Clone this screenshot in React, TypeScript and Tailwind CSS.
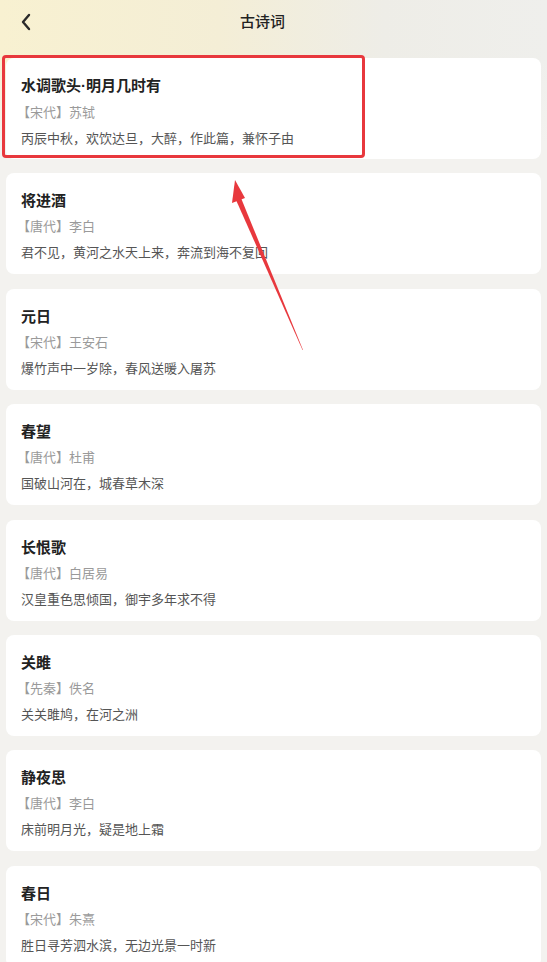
import React from 'react'

const poems = [
  {title: '水调歌头·明月几时有', era: '宋代', author: '苏轼', line: '丙辰中秋，欢饮达旦，大醉，作此篇，兼怀子由'},
  {title: '将进酒', era: '唐代', author: '李白', line: '君不见，黄河之水天上来，奔流到海不复回'},
  {title: '元日', era: '宋代', author: '王安石', line: '爆竹声中一岁除，春风送暖入屠苏'},
  {title: '春望', era: '唐代', author: '杜甫', line: '国破山河在，城春草木深'},
  {title: '长恨歌', era: '唐代', author: '白居易', line: '汉皇重色思倾国，御宇多年求不得'},
  {title: '关雎', era: '先秦', author: '佚名', line: '关关雎鸠，在河之洲'},
  {title: '静夜思', era: '唐代', author: '李白', line: '床前明月光，疑是地上霜'},
  {title: '春日', era: '宋代', author: '朱熹', line: '胜日寻芳泗水滨，无边光景一时新'},
]

// the middle dot is narrow in the reference, so give it a latin face
function Title({text}: {text: string}) {
  const parts = text.split('·')
  return (
    <>
      {parts.map((part, i) => (
        <React.Fragment key={i}>
          {i > 0 && <span style={{fontFamily: '"Liberation Sans", sans-serif'}}>·</span>}
          {part}
        </React.Fragment>
      ))}
    </>
  )
}

function PoemCard({p}: {p: (typeof poems)[number]}) {
  return (
    <div className="h-[101px] shrink-0 rounded-lg bg-white px-[15px] pt-[17px]">
      <div className="text-[15px] font-bold leading-[20px] text-[#222]">
        <Title text={p.title} />
      </div>
      <div className="mt-[7px] -ml-[4px] text-[13px] leading-[18px] text-[#9a9a9a]">
        【{p.era}】{p.author}
      </div>
      <div className="mt-[8px] text-[13px] leading-[18px] text-[#555]">{p.line}</div>
    </div>
  )
}

export default function App() {
  return (
    <div
      className="relative h-[962px] w-[547px] overflow-hidden bg-[#f3f2ef]"
      style={{fontFamily: '"Noto Sans CJK SC", "Noto Sans", sans-serif'}}
    >
      <div className="absolute inset-x-0 top-0 h-[200px] bg-[linear-gradient(90deg,#f8f1d1_0%,#f4eed6_40%,#eeede7_70%,#efefec_100%)]" />
      <div className="absolute inset-x-0 top-[60px] h-[140px] bg-[linear-gradient(180deg,rgba(243,242,239,0)_0%,#f3f2ef_60%)]" />

      <div className="relative">
        <header className="flex h-[43px] items-center px-[20px]">
          <svg width="12" height="18" viewBox="0 0 12 18" className="shrink-0">
            <path d="M9 2 L3 9 L9 16" fill="none" stroke="#2a2a2a" strokeWidth="2.4" strokeLinecap="round" strokeLinejoin="round" />
          </svg>
          <div className="flex-1 pr-[34px] text-center text-[15px] font-medium text-[#222]">古诗词</div>
        </header>

        <div className="mt-[15px] flex flex-col gap-[14.4px] px-[6px]">
          {poems.map((p) => (
            <PoemCard key={p.title} p={p} />
          ))}
        </div>
      </div>

      {/* annotation box + arrow */}
      <div className="absolute left-[2px] top-[55px] h-[103px] w-[363px] rounded-[4px] border-[3px] border-[#e8383d]" />
      <svg className="absolute left-0 top-0" width="547" height="400" viewBox="0 0 547 400">
        <polygon points="303,350 241,198 236,200 302.5,350" fill="#e8383d" />
        <polygon points="235,180 245,198 232,203" fill="#e8383d" />
      </svg>
    </div>
  )
}
